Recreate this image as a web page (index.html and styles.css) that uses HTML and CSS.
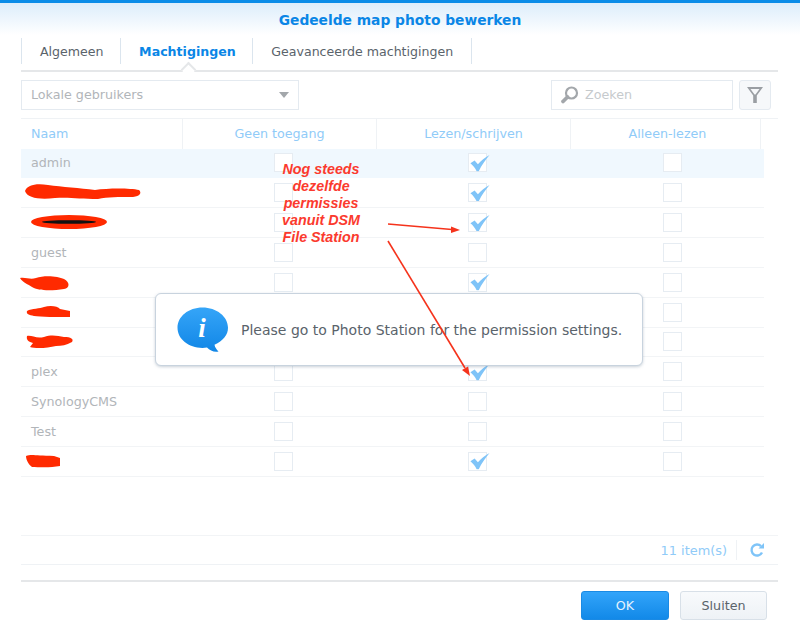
FILE: index.html
```html
<!DOCTYPE html>
<html lang="en">

<head>
  <meta charset="UTF-8">
  <title>Gedeelde map photo bewerken</title>
  <link rel="stylesheet" href="styles.css">
</head>

<body>
  <svg class="defs" width="0" height="0">
    <symbol id="tick" viewBox="0 0 24 20">
      <path d="M0.500 10 L5.500 6.500 L9.500 11 C13 7 18 3 23.500 0 C18.500 6 14 12 10.500 19.500 L8 19.500 C6 15.500 3.500 12.500 0.500 10 Z" fill="#7fc4f8" />
    </symbol>
  </svg>

  <div class="dialog">
    <div class="title">Gedeelde map photo bewerken</div>

    <div class="tabs">
      <div class="tab">Algemeen</div>
      <div class="tab active">Machtigingen</div>
      <div class="tab">Geavanceerde machtigingen</div>
    </div>

    <div class="toolbar">
      <div class="combo">
        <span>Lokale gebruikers</span>
        <span class="caret"></span>
      </div>
      <div class="search">
        <svg width="20" height="20" viewBox="0 0 20 20">
          <circle cx="11.500" cy="8" r="5.500" fill="none" stroke="#a3a7ab" stroke-width="2.200" />
          <path d="M7.500 12 L3 16.500" stroke="#a3a7ab" stroke-width="3.800" stroke-linecap="round" />
        </svg>
        <span>Zoeken</span>
      </div>
      <div class="filter">
        <svg width="18" height="18" viewBox="0 0 18 18">
          <path d="M1 1 H17 L10.800 9.500 V17 H7.200 V9.500 Z M4.500 3 L8.500 8.500 H9.500 L13.500 3 Z" fill="#9a9ea3" fill-rule="evenodd" />
        </svg>
      </div>
    </div>

    <div class="thead">
      <div class="th name">Naam</div>
      <div class="th">Geen toegang</div>
      <div class="th">Lezen/schrijven</div>
      <div class="th last">Alleen-lezen</div>
    </div>

    <div class="tbody" id="rows"></div>

    <div class="pager">
      <span>11 item(s)</span>
      <span class="pager-sep"></span>
      <svg width="16" height="16" viewBox="0 0 16 16">
        <path d="M13 10.500 A5.500 5.500 0 1 1 12 4.200" fill="none" stroke="#7fc4f8" stroke-width="2.400" />
        <path d="M9.500 6.500 H15 V1 Z" fill="#7fc4f8" />
      </svg>
    </div>

    <div class="footer">
      <button class="btn primary">OK</button>
      <button class="btn">Sluiten</button>
    </div>
  </div>

  <!-- message box over the table -->
  <div class="message">
    <svg class="bubble" width="52" height="46" viewBox="0 0 52 46">
      <defs>
        <linearGradient id="bubble" x1="0" y1="0" x2="0" y2="1">
          <stop offset="0" stop-color="#35a5f8" />
          <stop offset="1" stop-color="#1186e6" />
        </linearGradient>
      </defs>
      <path d="M25.500 0.500 C39.500 0.500 51 9.500 51 20.800 C51 28 46 34 37.500 37.800 C38 40.500 39.500 42.500 41.500 44.500 C37 45.500 33 43.500 30 40.500 C28.500 40.800 27 41 25.500 41 C11.500 41 0.500 32 0.500 20.800 C0.500 9.500 11.500 0.500 25.500 0.500 Z" fill="url(#bubble)" />
      <text x="25" y="30" class="info-i">i</text>
    </svg>
    <div>Please go to Photo Station for the permission settings.</div>
  </div>

  <!-- red annotation drawn on top of the screenshot -->
  <svg class="scribbles" width="800" height="628" viewBox="0 0 800 628">
    <path d="M25 191 C27 185 36 183 48 185 C62 187 80 188 95 190 C108 188 130 188 139 190 C142 193 140 196 133 197 C118 197 108 197 98 199 C80 199 70 197 55 198 C40 200 27 198 25 191 Z" fill="#ff2a00" />
    <ellipse cx="69" cy="222" rx="38" ry="7" fill="#ff2a00" />
    <ellipse cx="69" cy="222" rx="27" ry="1.800" fill="#111" />
    <path d="M20 278 C26 277 30 280 36 278 C44 275 58 276 64 279 C70 282 70 288 64 289 C52 291 38 291 32 287 C28 284 23 283 20 278 Z" fill="#ff2a00" />
    <path d="M27 311 C32 308 40 309 44 307 C50 305 58 306 60 309 L70 311 L70 317 C58 317 40 317 34 316 C29 315 26 314 27 311 Z" fill="#ff2a00" />
    <path d="M27 336 C32 335 36 339 44 337 C52 334 58 336 64 337 C71 337 74 339 72 342 C66 345 62 346 56 346 C48 348 36 349 30 347 L33 343 C29 342 26 340 27 336 Z" fill="#ff2a00" />
    <path d="M26 456 C32 454 36 456 54 456 L60 458 L60 466 C50 468 38 467 32 467 C29 465 26 460 26 456 Z" fill="#ff2a00" />

    <path d="M388 224 L452 229.500" stroke="#f5331c" stroke-width="1.600" />
    <path d="M460 230 L451 226.500 L451 233 Z" fill="#f5331c" />
    <path d="M388 241 L465 368" stroke="#f5331c" stroke-width="1.600" />
    <path d="M470 376 L462 370 L468 366.500 Z" fill="#f5331c" />
  </svg>

  <div class="note">Nog steeds<br>dezelfde<br>permissies<br>vanuit DSM<br>File Station</div>

  <script>
    // 11 users, names under the red scribbles are left out
    const users = [
      ["admin", 1], ["", 1], ["", 1], ["guest", 0], ["", 1], ["", 0],
      ["", 0], ["plex", 1], ["SynologyCMS", 0], ["Test", 0], ["", 1]
    ];

    const tick = '<svg class="tick"><use href="#tick"/></svg>';
    const rows = document.getElementById("rows");

    users.forEach((user, i) => {
      const row = document.createElement("div");
      row.className = i === 0 ? "row selected" : "row";
      row.innerHTML = `<div class="cell name">${user[0]}</div>
        <div class="cell"><span class="box"></span></div>
        <div class="cell"><span class="box">${user[1] ? tick : ""}</span></div>
        <div class="cell last"><span class="box"></span></div>`;
      rows.appendChild(row);
    });
  </script>
</body>

</html>
```

FILE: styles.css
```css
* {
  box-sizing: border-box;
}

body {
  margin: 0;
  width: 800px;
  height: 628px;
  overflow: hidden;
  position: relative;
  background: #fff;
  font-family: "DejaVu Sans", sans-serif;
  font-size: 12.700px;
  color: #5a636b;
}

.defs {
  position: absolute;
}

.dialog {
  height: 628px;
  display: flex;
  flex-direction: column;
}

.title {
  height: 35px;
  border-top: 3px solid #0a8ce8;
  background: linear-gradient(to bottom, #dcedfb, #fff);
  text-align: center;
  font-size: 13.800px;
  font-weight: bold;
  color: #0a86e6;
  line-height: 34px;
}

.tabs {
  display: flex;
  height: 37px;
  margin: 0 22px 0 21px;
  padding: 3px 0 6px;
  border-bottom: 2px solid #e5e7e9;
}

.tab {
  padding: 0 16.500px 0 18px;
  font-size: 12.600px;
  line-height: 28px;
  border-left: 1px solid #dbe5ee;
}

.tab:last-child {
  padding-right: 18px;
  border-right: 1px solid #dbe5ee;
}

.tab.active {
  font-weight: bold;
  color: #0a86e6;
  position: relative;
}

.tab.active::after {
  content: "";
  position: absolute;
  left: calc(50% - 4px);
  bottom: -11px;
  width: 9px;
  height: 9px;
  background: #fff;
  border-left: 2px solid #e5e7e9;
  border-top: 2px solid #e5e7e9;
  transform: rotate(45deg);
}

.toolbar {
  display: flex;
  margin: 8px 29px 0 21px;
  height: 30px;
}

.combo {
  width: 278px;
  display: flex;
  align-items: center;
  justify-content: space-between;
  padding: 0 9px 1px;
  border: 1px solid #e4eaf0;
  color: #b1b5b9;
}

.caret {
  width: 0;
  height: 0;
  border-left: 5.500px solid transparent;
  border-right: 5.500px solid transparent;
  border-top: 6px solid #a3a7ab;
}

.search {
  width: 182px;
  margin-left: auto;
  display: flex;
  align-items: center;
  gap: 5px;
  padding: 0 0 1px 8px;
  border: 1px solid #e4eaf0;
  color: #c6cacd;
}

.filter {
  width: 32px;
  margin-left: 6px;
  display: flex;
  align-items: center;
  justify-content: center;
  border: 1px solid #e4eaf0;
  border-radius: 3px;
  background: #f6f8fa;
}

.thead {
  display: grid;
  grid-template-columns: 162px 194px 194px 190px;
  margin: 8px 22px 0 21px;
  height: 30.500px;
  border-top: 1px solid #eff2f5;
}

.th {
  line-height: 29px;
  text-align: center;
  color: #90cbf8;
  border-right: 1px solid #eff2f5;
}

.th.name {
  text-align: left;
  padding-left: 10px;
}

.th.last {
  padding-left: 4px;
}

.tbody {
  width: 743px;
  margin-left: 21px;
  height: 386.500px;
}

.row {
  display: grid;
  grid-template-columns: 165.600px 194px 194px 189.400px;
  height: 29.850px;
  border-bottom: 1px solid #f2f4f6;
}

.row.selected {
  background: #f0f8fe;
  border-bottom-color: #f0f8fe;
}

.cell {
  display: flex;
  align-items: center;
  justify-content: center;
}

.cell.last {
  justify-content: flex-start;
  padding-left: 88px;
}

.cell.name {
  justify-content: flex-start;
  padding-left: 10px;
  color: #b1b5b9;
}

.box {
  width: 19px;
  height: 19px;
  border: 1px solid #e6ecf2;
  background: #fff;
  position: relative;
}

.tick {
  position: absolute;
  left: 1px;
  top: 0.500px;
  width: 20px;
  height: 16.700px;
}

.pager {
  display: flex;
  align-items: center;
  justify-content: flex-end;
  gap: 9px;
  height: 30px;
  margin: 0 22px 0 21px;
  padding-right: 13px;
  border-top: 1px solid #f2f4f6;
  border-bottom: 1px solid #eff2f5;
  font-size: 12.900px;
  color: #90cbf8;
}

.pager-sep {
  width: 1px;
  height: 20px;
  margin-right: 3px;
  background: #eff2f5;
}

.footer {
  display: flex;
  justify-content: flex-end;
  gap: 11px;
  margin: 15px 22px 0 21px;
  padding: 9px 11px 0 0;
  border-top: 2px solid #e5e7e9;
}

.btn {
  height: 29px;
  width: 87px;
  font: inherit;
  color: #5a636b;
  border: 1px solid #d8e0e8;
  border-radius: 3px;
  background: linear-gradient(to bottom, #f8fafc, #eef2f6);
}

.btn.primary {
  width: 88px;
  color: #e4f2fe;
  border-color: #1a8ae4;
  background: linear-gradient(to bottom, #32a4fa, #1289e8);
}

.message {
  position: absolute;
  left: 155px;
  top: 293px;
  width: 488px;
  height: 73px;
  display: flex;
  align-items: center;
  gap: 12px;
  padding-left: 21px;
  background: #fff;
  border: 1px solid #c8d3de;
  border-radius: 6px;
  box-shadow: 0 1px 3px rgba(120, 140, 160, 0.4);
  font-size: 14px;
}

.bubble {
  margin-top: 1px;
}

.info-i {
  font-family: "Liberation Serif", serif;
  font-style: italic;
  font-weight: bold;
  font-size: 27px;
  fill: #fff;
  text-anchor: middle;
}

.scribbles {
  position: absolute;
  left: 0;
  top: 0;
}

.note {
  position: absolute;
  left: 261px;
  top: 161px;
  width: 120px;
  text-align: center;
  font-family: "Liberation Sans", sans-serif;
  font-style: italic;
  font-weight: bold;
  font-size: 14.300px;
  line-height: 17px;
  color: #fb3a2e;
}
```
